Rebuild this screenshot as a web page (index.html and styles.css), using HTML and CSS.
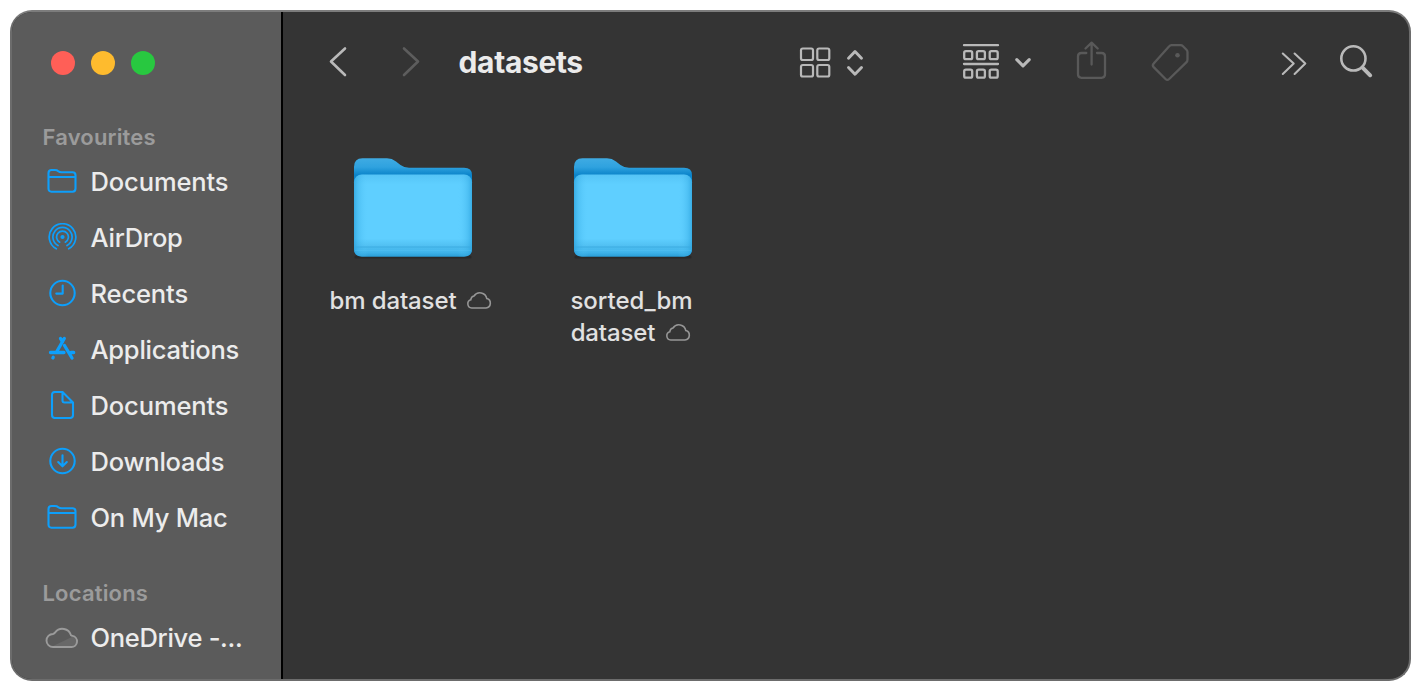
FILE: index.html
```html
<!DOCTYPE html>
<html lang="en">
<head>
<meta charset="utf-8">
<title>datasets</title>
<link rel="stylesheet" href="styles.css">
</head>
<body>
<svg class="defs" aria-hidden="true">
  <defs>
    <linearGradient id="back" x1="0" y1="0" x2="0" y2="1">
      <stop offset="0" stop-color="#3fabe3"/><stop offset=".09" stop-color="#2fa2df"/><stop offset=".17" stop-color="#0b84ca"/><stop offset="1" stop-color="#259ada"/>
    </linearGradient>
    <linearGradient id="front" x1="0" y1="0" x2="0" y2="1">
      <stop offset="0" stop-color="#55c4f6"/><stop offset=".12" stop-color="#5fcfff"/><stop offset=".78" stop-color="#5fcfff"/><stop offset=".87" stop-color="#51c0f2"/><stop offset=".95" stop-color="#3fb3ea"/><stop offset="1" stop-color="#2b9fd8"/>
    </linearGradient>
    <linearGradient id="sides">
      <stop offset="0" stop-color="#239bd8" stop-opacity=".65"/><stop offset=".035" stop-color="#35abe4" stop-opacity=".4"/><stop offset=".12" stop-color="#5fcfff" stop-opacity="0"/><stop offset=".88" stop-color="#5fcfff" stop-opacity="0"/><stop offset=".965" stop-color="#35abe4" stop-opacity=".4"/><stop offset="1" stop-color="#239bd8" stop-opacity=".65"/>
    </linearGradient>
    <symbol id="folder" viewBox="0 0 120 104">
      <path d="M3 100h114" stroke="#1f1f1f" stroke-width="3" stroke-linecap="round" opacity=".5"/>
      <path fill="url(#back)" d="M1 92V10Q1 1.300 9.500 1.300H34Q39 1.300 43 4.500L47.500 8Q51 10.700 56 10.700H111Q119 10.700 119 18V92Q119 99.500 111 99.500H9Q1 99.500 1 92Z"/>
      <rect x="1" y="17.500" width="118" height="82" rx="8" fill="url(#front)"/>
      <rect x="1" y="17.500" width="118" height="82" rx="8" fill="url(#sides)"/>
      <path d="M1.500 90H118.500" stroke="#3aa9df" stroke-width=".9"/>
      <path d="M2 93.300H118" stroke="#55c5f5" stroke-width=".8" opacity=".6"/>
    </symbol>
    <symbol id="dir" viewBox="0 0 32 28">
      <path d="M2.500 21.500V6Q2.500 3 5.500 3H9Q11 3 12.300 4.200Q13.500 5.300 15.500 5.300H26.500Q29.500 5.300 29.500 8.300V21.500Q29.500 24.700 26.500 24.700H5.500Q2.500 24.700 2.500 21.500ZM2.500 10H29.500"/>
    </symbol>
    <symbol id="cloud" viewBox="0 0 26 20">
      <path d="M5.700 18H20A4.800 4.800 0 0 0 20.800 8.600A7 7 0 0 0 8 6A4.300 4.300 0 0 0 4.800 9.800A4.200 4.200 0 0 0 5.700 18Z"/>
    </symbol>
  </defs>
</svg>
<div class="window">
  <aside class="sidebar">
    <div class="lights"><i class="light close"></i><i class="light minimise"></i><i class="light zoom"></i></div>
    <h2 class="heading">Favourites</h2>
    <ul class="list">
      <li class="item"><svg class="icon" viewBox="0 0 32 28"><use href="#dir"/></svg><span>Documents</span></li>
      <li class="item"><svg class="icon thin" viewBox="0 0 32 28">
        <circle cx="16.500" cy="14" r="2.100" class="solid"/>
        <path d="M13.700 19.200A5.900 5.900 0 1 1 19.300 19.200M12 22.500A9.600 9.600 0 1 1 21 22.500M10.300 25.800A13.300 13.300 0 1 1 22.700 25.800"/></svg><span class="snug">AirDrop</span></li>
      <li class="item"><svg class="icon" viewBox="0 0 32 28"><circle cx="16.500" cy="14" r="12.200"/><path d="M16.700 6.500V14.600H10.300"/></svg><span>Recents</span></li>
      <li class="item"><svg class="icon bold" viewBox="0 0 32 28"><path d="M4.500 17.500H18M25 17.500H27.700M18.300 3.500L10.800 16.500M14.500 3.500L16.500 7M18.500 10.500L26 23M7.200 22.300L6.900 22.900"/></svg><span class="snug">Applications</span></li>
      <li class="item"><svg class="icon" viewBox="0 0 32 28"><path d="M6 24V4Q6 1 9 1H16.500L27 11.500V24Q27 27 24 27H9Q6 27 6 24ZM16.500 1V9.500Q16.500 11.500 18.500 11.500H27"/></svg><span>Documents</span></li>
      <li class="item"><svg class="icon" viewBox="0 0 32 28"><circle cx="16.500" cy="14" r="12.200"/><path d="M16.500 8.300V19M12.200 15L16.500 19.300L20.800 15"/></svg><span class="snug">Downloads</span></li>
      <li class="item"><svg class="icon" viewBox="0 0 32 28"><use href="#dir"/></svg><span class="snug">On My Mac</span></li>
    </ul>
    <h2 class="heading locations">Locations</h2>
    <ul class="list">
      <li class="item drive"><svg class="icon cloud-drive" viewBox="0 0 34 26"><path class="shade" d="M8 22L29 12Q32 15 31.500 18Q31 22 26 22Z"/><path d="M8 23H26.500A5.600 5.600 0 0 0 27.500 11.900Q26.500 11.700 26 11.300A9 9 0 0 0 10.200 8.400Q9.300 9.700 8 10A6.500 6.500 0 0 0 8 23Z"/></svg><span class="tight">OneDrive -...</span></li>
    </ul>
  </aside>
  <main class="main">
    <header class="toolbar">
      <svg class="tool" width="20" height="40" viewBox="328 42 20 40"><path d="M345 48.500L331 61.500L345 75"/></svg>
      <svg class="tool forward" width="20" height="40" viewBox="401 42 20 40"><path d="M404 48.500L418 61.500L404 75"/></svg>
      <h1 class="title">datasets</h1>
      <svg class="tool view" width="68" height="40" viewBox="798 42 68 40"><g stroke-width="2.200"><rect x="801" y="48.500" width="12" height="11.500" rx="1.800"/><rect x="817.300" y="48.500" width="12" height="11.500" rx="1.800"/><rect x="801" y="65" width="12" height="11.500" rx="1.800"/><rect x="817.300" y="65" width="12" height="11.500" rx="1.800"/></g><path stroke-width="2.900" d="M848.500 58.300L855 51.500L861.500 58.300M848.500 67.500L855 74.300L861.500 67.500"/></svg>
      <svg class="tool group" width="74" height="40" viewBox="960 42 74 40"><g stroke-width="2.300"><path d="M964 45.200H998M964 64H998"/><rect x="964.200" y="51.200" width="8" height="8" rx="1.700"/><rect x="976.900" y="51.200" width="8" height="8" rx="1.700"/><rect x="989.700" y="51.200" width="8" height="8" rx="1.700"/><rect x="964.200" y="69.700" width="8" height="8" rx="1.700"/><rect x="976.900" y="69.700" width="8" height="8" rx="1.700"/><rect x="989.700" y="69.700" width="8" height="8" rx="1.700"/></g><path stroke-width="3.100" d="M1016.800 59.700L1023 65.900L1029.200 59.700"/></svg>
      <svg class="tool share" width="36" height="42" viewBox="1074 41 36 42"><path stroke-width="2.300" d="M1086.300 53H1081.500Q1078 53 1078 56.500V74.300Q1078 77.800 1081.500 77.800H1101.500Q1105 77.800 1105 74.300V56.500Q1105 53 1101.500 53H1097M1091.600 64.500V43.500M1085.500 48.500L1091.600 42.700L1097.700 48.500"/></svg>
      <svg class="tool tag" width="42" height="42" viewBox="1150 41 42 42"><path stroke-width="2.300" d="M1171.500 45.200H1180.500Q1182 45.200 1183 46.200L1186.500 49.700Q1187.500 50.700 1187.500 52V59.500Q1187.500 61.200 1186.300 62.400L1169.200 79Q1167.300 80.700 1165.500 79L1153.700 67.100Q1152 65.300 1153.700 63.500L1169 46.400Q1170 45.200 1171.500 45.200Z"/><circle cx="1177.500" cy="55.200" r="2.300" class="dot"/></svg>
      <svg class="tool more" width="30" height="40" viewBox="1279 42 30 40"><path stroke-width="2.100" d="M1282.800 53.500L1293.700 63.500L1282.800 74M1294.600 53.500L1305.300 63.500L1294.600 74"/></svg>
      <svg class="tool search" width="38" height="40" viewBox="1338 42 38 40"><circle cx="1353.400" cy="58.400" r="12.100" stroke-width="2.600"/><path stroke-width="3.900" d="M1362.800 67.800L1370.200 75.300"/></svg>
    </header>
    <section class="files">
      <div class="file">
        <svg class="folder" width="120" height="104"><use href="#folder"/></svg>
        <div class="name"><span>bm dataset</span><svg class="cloud" width="26" height="20"><use href="#cloud"/></svg></div>
      </div>
      <div class="file">
        <svg class="folder" width="120" height="104"><use href="#folder"/></svg>
        <div class="name single"><span>sorted_bm</span></div>
        <div class="name"><span>dataset</span><svg class="cloud" width="26" height="20"><use href="#cloud"/></svg></div>
      </div>
    </section>
  </main>
</div>
</body>
</html>
```
FILE: styles.css
```css
* { box-sizing: border-box; }
body {
  margin: 0;
  padding: 10px 0 0 9.500px;
  height: 692px;
  overflow: hidden;
  background: #fff;
  font-family: Inter, "Liberation Sans", sans-serif;
}
.defs { display: block; width: 0; height: 0; }
.window {
  display: flex;
  width: 1401.500px;
  height: 671px;
  overflow: hidden;
  border: 2px solid #6c6c6c;
  border-top-color: #7c7c7c;
  border-radius: 22px;
  background: #343434;
}
.sidebar {
  width: 271px;
  flex: none;
  padding: 38.700px 0 0 31px;
  background: #5b5b5b;
  border-right: 2px solid #000;
}
.lights { display: flex; gap: 16px; padding-left: 8px; height: 24px; margin-bottom: 47.300px; }
.light { width: 24px; height: 24px; border-radius: 50%; }
.close { background: #ff5f57; }
.minimise { background: #febb2e; }
.zoom { background: #28c840; }
.heading {
  height: 30px;
  margin: 0 0 1px;
  line-height: 30px;
  font-size: 22px;
  font-weight: 600;
  letter-spacing: 0.18px;
  color: #9b9b9b;
}
.list { margin: 0; padding: 0; list-style: none; }
.item {
  display: flex;
  align-items: center;
  gap: 13px;
  height: 56px;
  padding-left: 3px;
  font-size: 25.500px;
  font-weight: 500;
  letter-spacing: -0.12px;
  color: #ececec;
  white-space: nowrap;
}
.item span { padding-top: 1.500px; }
.icon { width: 32px; height: 28px; flex: none; fill: none; stroke: #0d9ffb; stroke-width: 2.100; stroke-linecap: round; stroke-linejoin: round; }
.item .snug { letter-spacing: -0.24px; }
.item .tight { letter-spacing: -0.3px; }
.thin { stroke-width: 1.700; }
.bold { stroke-width: 3.300; }
.solid { fill: #0d9ffb; stroke: none; }
.locations { margin-top: 33px; }
.cloud-drive { width: 34px; height: 26px; stroke: #9b9b9b; stroke-width: 1.900; }
.shade { fill: #686868; stroke: none; }
.drive { padding-left: 2px; gap: 12px; }
.main { flex: 1; min-width: 0; }
.toolbar { display: flex; align-items: center; height: 100px; padding-left: 45px; }
.tool { flex: none; fill: none; stroke: #b9b9b9; stroke-width: 2.600; stroke-linecap: round; stroke-linejoin: round; }
.forward { margin-left: 53px; stroke: #5d5d5d; }
.title { width: 130px; margin: 0 0 0 38px; font-size: 30px; line-height: 36px; font-weight: 700; letter-spacing: -0.35px; color: #ebebeb; }
.view { margin-left: 209px; }
.group { margin-left: 94px; }
.share { margin-left: 40px; stroke: #595959; }
.tag { margin-left: 40px; stroke: #595959; }
.dot { fill: #595959; stroke: none; }
.more { margin-left: 87px; }
.search { margin-left: 29px; }
.files { display: flex; padding: 45px 0 0 20px; }
.file { width: 220px; display: flex; flex-direction: column; align-items: center; }
.folder { display: block; margin-bottom: 23px; }
.name { display: flex; align-items: center; gap: 10px; height: 32px; padding-right: 3px; font-size: 24px; font-weight: 500; letter-spacing: -0.12px; color: #e1e1e1; white-space: nowrap; }
.single { padding-right: 2px; letter-spacing: 0; }
.cloud { fill: none; stroke: #969696; stroke-width: 1.600; }
```
